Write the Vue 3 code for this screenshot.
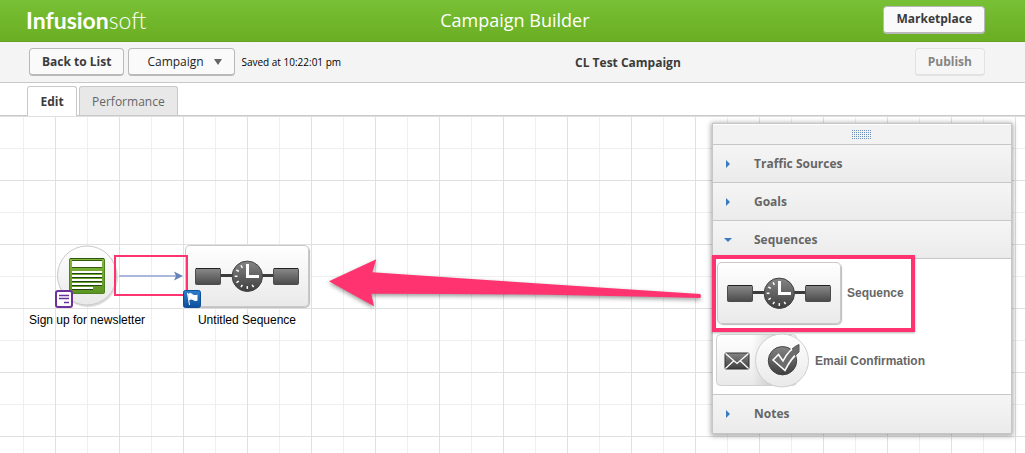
<script setup>
import { ref } from 'vue'

const menu = ref('Campaign')
const ticks = [150, 180, 210, 240, 270, 300, 330]
</script>

<template>
  <div class="app">
    <svg class="defs" width="0" height="0" aria-hidden="true">
      <defs>
        <linearGradient id="metal" x1="0" y1="0" x2="0" y2="1">
          <stop offset="0" stop-color="#8a8a8a" />
          <stop offset="1" stop-color="#4a4a4a" />
        </linearGradient>
        <linearGradient id="dial" x1="0" y1="0" x2="0" y2="1">
          <stop offset="0" stop-color="#858585" />
          <stop offset="1" stop-color="#3d3d3d" />
        </linearGradient>
        <linearGradient id="leaf" x1="0" y1="0" x2="0" y2="1">
          <stop offset="0" stop-color="#86b83c" />
          <stop offset="1" stop-color="#5c9423" />
        </linearGradient>
        <linearGradient id="sky" x1="0" y1="0" x2="0" y2="1">
          <stop offset="0" stop-color="#2f7fcb" />
          <stop offset="1" stop-color="#0b4f9c" />
        </linearGradient>
        <linearGradient id="plate" x1="0" y1="0" x2="0" y2="1">
          <stop offset="0" stop-color="#ffffff" />
          <stop offset="1" stop-color="#e9e9e9" />
        </linearGradient>
        <linearGradient id="fold" x1="0" y1="0" x2="1" y2="0">
          <stop offset="0" stop-color="#000" stop-opacity="0" />
          <stop offset="1" stop-color="#000" stop-opacity="0.15" />
        </linearGradient>
        <symbol id="sequence" viewBox="0 0 124 62">
          <path d="M36 30.5H88" stroke="#3c3c3c" stroke-width="3" />
          <rect x="10.5" y="23.5" width="25" height="16" rx="1" fill="url(#metal)" stroke="#4c4c4c" />
          <rect x="88.5" y="23.5" width="25" height="16" rx="1" fill="url(#metal)" stroke="#4c4c4c" />
          <path d="M11 23.5H35M89 23.5H113" stroke="#222" />
          <circle cx="62.3" cy="31.3" r="15.2" fill="url(#dial)" stroke="#444" />
          <g stroke="#fff" stroke-width="1.5">
            <path v-for="a in ticks" :key="a" d="M62.3 21.5V18.7" :transform="`rotate(${a} 62.3 31.3)`" />
          </g>
          <path d="M62.5 19V31.5H74" fill="none" stroke="#fff" stroke-width="3" />
        </symbol>
      </defs>
    </svg>

    <header class="top">
      <div class="logo"><b>Infusion</b><span>soft</span></div>
      <h1>Campaign Builder</h1>
      <button class="btn" type="button">Marketplace</button>
    </header>

    <div class="toolbar">
      <div class="left">
        <button class="btn" type="button">Back to List</button>
        <div class="picker">
          <select v-model="menu" class="btn" aria-label="Campaign menu">
            <option>Campaign</option>
          </select>
          <svg width="8" height="6" viewBox="0 0 8 6" aria-hidden="true"><path d="M0 0H8L4 6Z" fill="#666" /></svg>
        </div>
        <span class="saved">Saved at 10:22:01 pm</span>
      </div>
      <h2>CL Test Campaign</h2>
      <button class="btn publish" type="button" disabled>Publish</button>
    </div>

    <nav class="tabs">
      <button class="tab active" type="button">Edit</button>
      <button class="tab" type="button">Performance</button>
    </nav>

    <main class="canvas">
      <div class="node signup">
        <svg width="68" height="64" viewBox="-1 0 68 64" aria-hidden="true">
          <circle cx="34" cy="32" r="30" fill="#bbb" opacity="0.5" />
          <circle cx="33" cy="30.5" r="29.5" fill="url(#plate)" stroke="#c9c9c9" />
          <rect x="15.5" y="13.5" width="35" height="35" rx="1" fill="url(#leaf)" stroke="#4d8020" />
          <path d="M16 13.5H50" stroke="#2d5510" />
          <rect x="18" y="16" width="30" height="6" fill="#fff" />
          <path d="M18 15.5H48M18 22.5H48" stroke="#33590f" />
          <path d="M18 27H48M18 31H48M18 35H48M18 39H48M18 43H39" stroke="#fff" stroke-width="2" />
          <path d="M18 28.5H48M18 32.5H48M18 36.5H48M18 40.5H48M18 44.5H39" stroke="#23420d" />
          <rect x="2" y="46" width="16" height="16" rx="2" fill="#fff" stroke="#6e309b" stroke-width="2" />
          <path d="M5 50.5H15M5 53.5H15M10 57.5H15" stroke="#6e309b" stroke-width="1.5" />
        </svg>
        <span>Sign up for newsletter</span>
      </div>

      <div class="node sequence">
        <div class="tile">
          <svg width="124" height="62"><use href="#sequence" /></svg>
        </div>
        <span>Untitled Sequence</span>
      </div>

      <svg class="marks" width="720" height="320" viewBox="0 116 720 320" aria-hidden="true">
        <path d="M119 276H177" stroke="#a9b8da" stroke-width="2" />
        <path d="M174 271.5L183 276L174 280.5L176 276Z" fill="#6584bd" />
        <rect x="115" y="256" width="72" height="39" fill="none" stroke="#ff3370" stroke-width="2" />
        <rect x="183.500" y="290.5" width="17" height="17" rx="2" fill="url(#sky)" stroke="#0c4e98" />
        <path d="M187.5 293L189.500 305" stroke="#fff" />
        <path d="M188 294C190 292.500 191.500 293 193 294.500C194.500 295.500 196 295 197.500 294.500L197.500 300.500C195.500 301.500 194.500 301 193 300C191.500 299 190 299.500 189 300.500Z" fill="#fff" />
        <path class="big" d="M329 281.3L376.3 259.3L372.3 272.3Q520 282.5 700 294Q702 296 700 298Q520 293.5 371.3 293.7L374 306.3Z" fill="#ff3370" />
      </svg>

      <aside class="panel">
        <div class="grip">
          <svg width="20" height="10" aria-hidden="true">
            <defs>
              <pattern id="dots" width="2" height="2" patternUnits="userSpaceOnUse"><rect width="1" height="1" fill="#6d8fb8" /></pattern>
            </defs>
            <rect width="20" height="10" fill="url(#dots)" />
          </svg>
        </div>
        <button class="head" type="button" aria-expanded="false">
          <svg width="8" height="8" viewBox="0 0 8 8" aria-hidden="true"><path d="M2 0L6 4L2 8Z" fill="#3a7abf" /></svg>Traffic Sources
        </button>
        <button class="head" type="button" aria-expanded="false">
          <svg width="8" height="8" viewBox="0 0 8 8" aria-hidden="true"><path d="M2 0L6 4L2 8Z" fill="#3a7abf" /></svg>Goals
        </button>
        <button class="head" type="button" aria-expanded="true">
          <svg width="8" height="8" viewBox="0 0 8 8" aria-hidden="true"><path d="M0 2H8L4 6Z" fill="#3a7abf" /></svg>Sequences
        </button>
        <div class="items">
          <div class="item first">
            <div class="tile">
              <svg width="124" height="62"><use href="#sequence" /></svg>
            </div>
            <span>Sequence</span>
            <i class="frame"></i>
          </div>
          <div class="item">
            <svg width="93" height="56" viewBox="0 0 93 56" aria-hidden="true">
              <rect x="0.5" y="1.5" width="80" height="51" rx="4" fill="url(#plate)" stroke="#cfcfcf" />
              <path d="M36 2H60V52H36Z" fill="url(#fold)" />
              <circle cx="66" cy="27.5" r="26.5" fill="url(#plate)" stroke="#cfcfcf" />
              <rect x="9" y="20" width="24" height="16" rx="1" fill="url(#dial)" stroke="#333" />
              <path d="M9.5 20.5L21 30.5L32.5 20.5M9.5 35.5L17.5 28M32.5 35.5L24.5 28" fill="none" stroke="#fff" stroke-width="1.3" />
              <circle cx="66.5" cy="27.7" r="14.2" fill="url(#dial)" stroke="#444" />
              <path d="M57 27L62.5 21.5L67 28Q73 16 83 12V19Q75 25 69 37.5Z" fill="#6c6c6c" stroke="#fff" stroke-width="1.6" />
              <path d="M76 16Q79 13 83 11.500V19Q80.500 21 79 23" fill="#6c6c6c" stroke="#555" />
            </svg>
            <span>Email Confirmation</span>
          </div>
        </div>
        <button class="head" type="button" aria-expanded="false">
          <svg width="8" height="8" viewBox="0 0 8 8" aria-hidden="true"><path d="M2 0L6 4L2 8Z" fill="#3a7abf" /></svg>Notes
        </button>
      </aside>
    </main>
  </div>
</template>

<style>
body { margin: 0; }
</style>

<style scoped>
* { box-sizing: border-box; }
.app {
  display: flex;
  flex-direction: column;
  min-height: 100vh;
  background: #fff;
  color: #111;
  font-family: "Open Sans", "Noto Sans", sans-serif;
}
.defs { position: absolute; }
.top {
  display: flex;
  align-items: center;
  justify-content: space-between;
  height: 42px;
  padding: 0 40px 2px 26px;
  background: linear-gradient(#78c035, #6aae23);
  border-bottom: 1px solid #64a125;
  color: #fff;
}
.logo { font: 400 23px/28px Lato, sans-serif; }
.logo b { font-weight: 700; }
.logo span { font-weight: 300; }
h1 { margin: 0; font-size: 18px; line-height: 24px; font-weight: 400; }
h2 { margin: 0; padding-top: 2px; font-size: 12px; line-height: 16px; font-weight: 700; color: #3b3b3b; }
.btn {
  height: 28px;
  padding: 0 12px;
  border: 1px solid #b9b9b9;
  border-bottom-width: 2px;
  border-radius: 4px;
  background: #fafafa;
  color: #3b3b3b;
  font: 700 12px/20px "Open Sans", sans-serif;
}
.toolbar {
  display: flex;
  align-items: center;
  justify-content: space-between;
  height: 41px;
  padding: 0 40px 0 29px;
  background: #f4f4f4;
  border-bottom: 1px solid #c8c8c8;
}
.left { display: flex; align-items: center; gap: 4px; }
.picker { position: relative; }
.picker select { display: block; appearance: none; width: 107px; padding: 0 18px; color: #222; font-weight: 400; }
.picker svg { position: absolute; right: 13px; top: 11px; pointer-events: none; }
.saved { padding-left: 2px; font-size: 10px; line-height: 16px; color: #000; }
.publish { border-color: #e2e2e2; background: #f6f6f6; color: #858585; }
.tabs {
  display: flex;
  align-items: flex-end;
  gap: 2px;
  height: 33px;
  padding-left: 27px;
  border-bottom: 1px solid #c8c8c8;
}
.tab {
  min-width: 50px;
  height: 29px;
  padding: 1px 12px 0;
  border: 1px solid #c8c8c8;
  border-bottom: 0;
  border-radius: 3px 3px 0 0;
  background: #e8e8e8;
  color: #666;
  font: 400 12px/20px "Open Sans", sans-serif;
}
.tab.active { height: 30px; margin-bottom: -1px; background: #fff; color: #3b3b3b; font-weight: 700; }
.canvas {
  position: relative;
  flex: 1;
  min-height: 337px;
  overflow: hidden;
  background-color: #fff;
  background-image:
    linear-gradient(90deg, #e0e0e0 1px, transparent 1px),
    linear-gradient(#e0e0e0 1px, transparent 1px),
    linear-gradient(90deg, #efefef 1px, transparent 1px),
    linear-gradient(#efefef 1px, transparent 1px);
  background-size: 64px 64px;
  background-position: 55px 0, 55px 0, 23px 32px, 23px 32px;
}
.node {
  position: absolute;
  top: 129px;
  display: flex;
  flex-direction: column;
  align-items: center;
  color: #000;
  font: 400 12px/16px "Liberation Sans", Arial, sans-serif;
  white-space: nowrap;
}
.node svg { display: block; }
.signup { left: 29px; gap: 3px; }
.sequence { left: 185px; gap: 5px; }
.tile {
  width: 124px;
  height: 62px;
  border-radius: 5px;
  background: linear-gradient(#fff, #e9e9e9);
  box-shadow: inset 0 0 0 1px #c9c9c9, 1px 1px 1px #bbb;
}
.tile svg { display: block; }
.marks { position: absolute; left: 0; top: 0; pointer-events: none; }
.big { filter: drop-shadow(0 2px 2px rgba(0, 0, 0, 0.4)); }
.panel {
  position: absolute;
  right: 13px;
  top: 7px;
  width: 300px;
  border: 1px solid #c4c8c4;
  background: #fff;
  box-shadow: 0 1px 5px 1px rgba(0, 0, 0, 0.35);
}
.grip {
  display: flex;
  align-items: center;
  justify-content: center;
  height: 21px;
  background: #f2f2f2;
  border-top: 1px solid #fff;
  border-bottom: 1px solid #c6c8c8;
}
.head {
  display: flex;
  align-items: center;
  gap: 22px;
  width: 100%;
  height: 38px;
  padding: 0 11px;
  border: 0;
  border-bottom: 1px solid #c6c8c8;
  background: linear-gradient(#f5f5f5, #ecebec);
  color: #666;
  font: 700 12px/20px "Open Sans", sans-serif;
}
.head:last-child { border-bottom: 0; }
.items {
  display: flex;
  flex-direction: column;
  gap: 9px;
  padding: 3px 3px 5px;
  border-bottom: 1px solid #c6c8c8;
}
.item {
  position: relative;
  display: flex;
  align-items: center;
  gap: 6px;
  color: #666;
  font: 700 12px/16px "Liberation Sans", Arial, sans-serif;
}
.item.first { padding-left: 1px; }
.frame {
  position: absolute;
  left: -4px;
  top: -7px;
  width: 203px;
  height: 77px;
  border: 4px solid #ff3370;
  box-shadow: 0 1px 2px rgba(0, 0, 0, 0.3);
}
</style>
